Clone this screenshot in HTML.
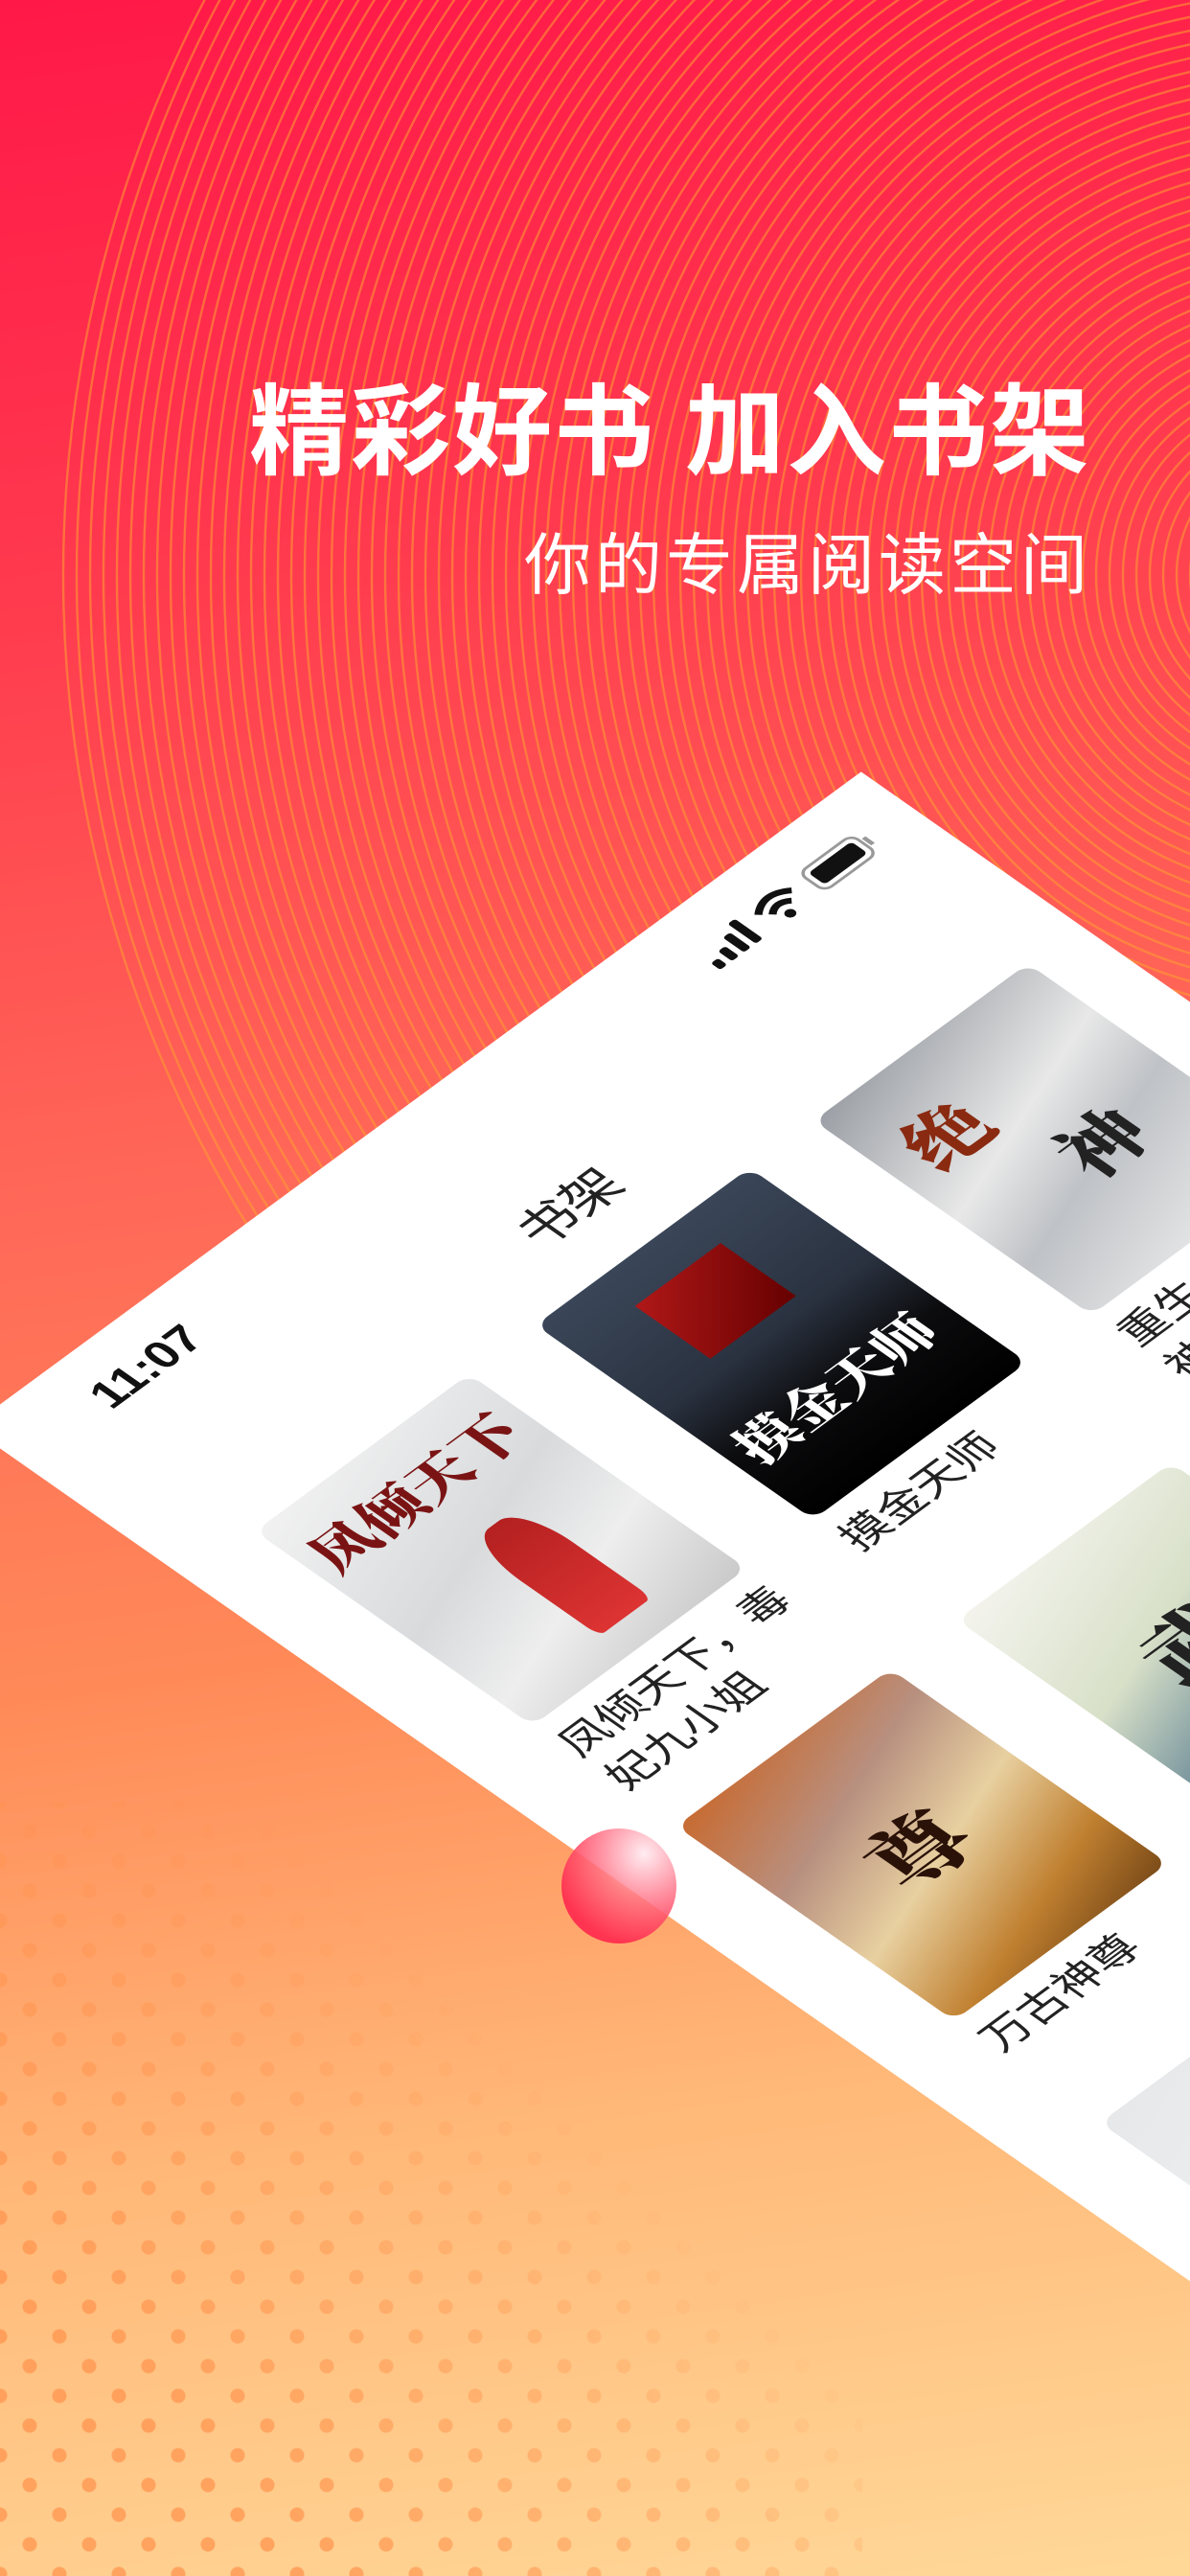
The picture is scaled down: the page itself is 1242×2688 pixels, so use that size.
<!DOCTYPE html>
<html><head><meta charset="utf-8">
<style>
html,body{margin:0;padding:0;width:1242px;height:2688px;overflow:hidden}
#wrap{position:absolute;left:0;top:0;width:1242px;height:2688px;overflow:hidden;
background:linear-gradient(172deg,#ff1848 0%,#ff3a4e 22%,#ff6a58 45%,#ff8a58 62%,#ffb878 80%,#ffd898 100%);
font-family:"Liberation Sans","Noto Sans CJK SC",sans-serif}
.dots{position:absolute;left:0;top:1880px;width:900px;height:808px;
background-image:radial-gradient(circle,rgba(255,145,75,.7) 7px,transparent 8px),radial-gradient(circle,rgba(255,145,75,.7) 7px,transparent 8px);
background-size:62px 62px;background-position:0 0,31px 31px;
-webkit-mask-image:linear-gradient(45deg,#000 20%,rgba(0,0,0,.5) 45%,transparent 65%);mask-image:linear-gradient(45deg,#000 20%,rgba(0,0,0,.5) 45%,transparent 65%)}
.t1{position:absolute;right:103px;top:366px;font-size:104px;font-weight:bold;color:#fff;letter-spacing:2px;white-space:nowrap}
.t2{position:absolute;right:103px;top:534px;font-size:70px;color:#fff;letter-spacing:4px;white-space:nowrap}
.screen{position:absolute;left:0;top:0;width:375px;height:1000px;background:#fff;transform-origin:0 0;
transform:matrix(2.482,-1.823,2.457,1.719,-32,1489)}
.screen *{position:absolute}
.time{left:34px;top:13px;font-size:16px;font-weight:bold;color:#111}
.title{left:0;width:375px;top:52px;text-align:center;font-size:18px;color:#222}
.cv{width:90px;height:118px;border-radius:5px;overflow:hidden}
.nm{width:92px;font-size:15px;line-height:20px;color:#222}
.cal{font-family:"Noto Serif CJK SC",serif;font-weight:900}
</style></head><body><div id="wrap">
<svg width="1242" height="2688" style="position:absolute;left:0;top:0">
<g fill="none" stroke="#ffa030" stroke-width="2.4" opacity=".55" id="rings"></g></svg>
<script>
var g=document.getElementById('rings'),s='';
for(var r=90;r<1300;r+=14){s+='<circle cx="1360" cy="600" r="'+r+'"/>';}
g.innerHTML=s;
</script>
<div class="dots"></div>
<div class="t1">精彩好书 加入书架</div>
<div class="t2">你的专属阅读空间</div>

<div class="screen">
 <div class="time">11:07</div>
 <svg style="left:288px;top:14px" width="72" height="16" viewBox="0 0 72 16">
  <rect x="0" y="10" width="3" height="4" rx="1" fill="#111"/><rect x="5" y="8" width="3" height="6" rx="1" fill="#111"/><rect x="10" y="5" width="3" height="9" rx="1" fill="#111"/><rect x="15" y="2" width="3" height="12" rx="1" fill="#111"/>
  <path d="M24 6 Q31 0 38 6" stroke="#111" stroke-width="2.4" fill="none"/><path d="M27 9 Q31 5.5 35 9" stroke="#111" stroke-width="2.4" fill="none"/><circle cx="31" cy="12.5" r="1.8" fill="#111"/>
  <rect x="44.5" y="2.5" width="22" height="11" rx="3" fill="none" stroke="#999" stroke-width="1"/><rect x="46.5" y="4.5" width="18" height="7" rx="1.5" fill="#111"/><rect x="67.5" y="6" width="1.5" height="4" fill="#999"/>
 </svg>
 <div class="title">书架</div>

 <div class="cv" style="left:28px;top:93px;background:linear-gradient(160deg,#f2f2f2,#d8dadc 45%,#eee 70%,#c9c9c9)">
  <div class="cal" style="left:4px;top:8px;font-size:20px;color:#7a1414;white-space:nowrap">凤倾天下</div>
  <div style="left:40px;top:50px;width:22px;height:56px;border-radius:40% 40% 10% 10%;background:linear-gradient(#b42020,#d33)"></div>
 </div>
 <div class="nm" style="left:28px;top:217px">凤倾天下，毒妃九小姐</div>

 <div class="cv" style="left:146px;top:93px;background:linear-gradient(180deg,#3a4658 0%,#2a3240 45%,#0c0c0e 70%,#000)">
  <div style="left:26px;top:16px;width:36px;height:32px;background:linear-gradient(135deg,#b01818,#600)"></div>
  <div class="cal" style="left:5px;top:70px;font-size:19px;color:#fff;white-space:nowrap">摸金天师</div>
 </div>
 <div class="nm" style="left:146px;top:217px">摸金天师</div>

 <div class="cv" style="left:263px;top:93px;background:linear-gradient(160deg,#9a9ea4,#e8e8e8 40%,#bfc2c6 60%,#f0f0f0)">
  <div class="cal" style="left:10px;top:14px;font-size:26px;color:#8a2a10;white-space:nowrap">绝</div>
  <div class="cal" style="left:40px;top:50px;font-size:26px;color:#222;white-space:nowrap">神</div>
 </div>
 <div class="nm" style="left:263px;top:217px">重生之绝世武神</div>

 <div class="cv" style="left:28px;top:272px;background:linear-gradient(160deg,#c86a30,#b89080 30%,#e8d0a0 55%,#c08030 80%,#7a4a18)">
  <div class="cal" style="left:28px;top:36px;font-size:30px;color:#2a1208;white-space:nowrap">尊</div>
 </div>
 <div class="nm" style="left:28px;top:396px">万古神尊</div>

 <div class="cv" style="left:146px;top:272px;background:linear-gradient(160deg,#f4f4ee,#d8e0c8 40%,#6a8a98 70%,#e8d8c8)">
  <div class="cal" style="left:26px;top:34px;font-size:30px;color:#222;white-space:nowrap">武</div>
 </div>
 <div class="nm" style="left:146px;top:396px">武动乾坤</div>

 <div class="cv" style="left:263px;top:272px;background:linear-gradient(160deg,#ddd,#f2f2f2)"></div>
 <div class="cv" style="left:28px;top:452px;background:linear-gradient(160deg,#e6e8ea,#f6f6f6)"></div>
</div>

<div style="position:absolute;left:586px;top:1908px;width:120px;height:120px;border-radius:50%;background:radial-gradient(circle at 72% 22%,rgba(255,235,240,.9) 0%,rgba(255,120,140,.8) 35%,#ff3450 75%)"></div>
</div></body></html>
